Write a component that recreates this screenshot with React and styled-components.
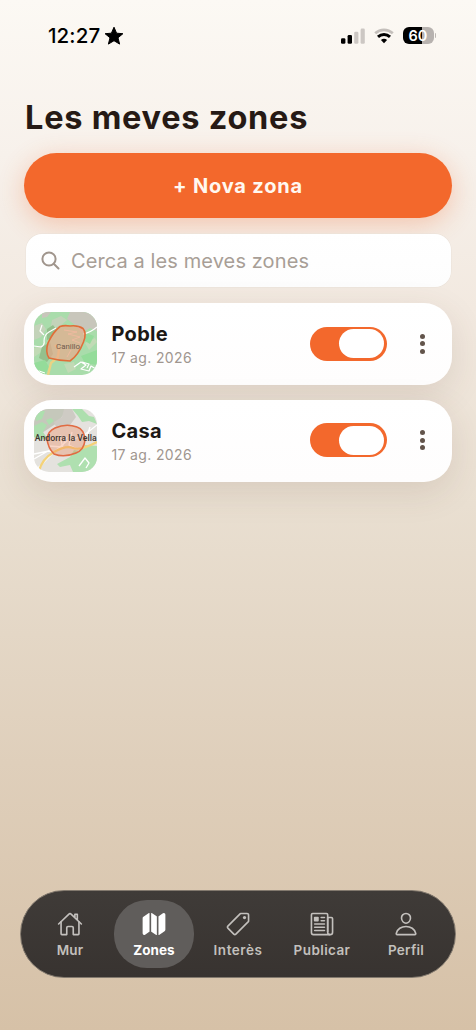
import React from 'react';
import styled, { createGlobalStyle } from 'styled-components';
import { IoHomeOutline, IoMap, IoPricetagOutline, IoNewspaperOutline, IoPersonOutline } from 'react-icons/io5';

const GlobalStyle = createGlobalStyle`
  * { box-sizing: border-box; }
  body { margin: 0; }
`;

const Screen = styled.div`
  width: 476px;
  height: 1030px;
  overflow: hidden;
  display: flex;
  flex-direction: column;
  font-family: Inter, 'Liberation Sans', sans-serif;
  color: #261a15;
  background: linear-gradient(180deg, #fcf9f4 0%, #f7f1eb 15%, #f2e9e0 30%, #e9dfd1 49%, #dfcfbb 74%, #d6c1a7 100%);
`;

const StatusBar = styled.header`
  height: 70px;
  flex: none;
  display: flex;
  align-items: center;
  justify-content: space-between;
  padding: 1px 40px 0 48px;
  color: #000;
`;

const Clock = styled.div`
  display: flex;
  align-items: center;
  gap: 3.5px;
  font-size: 20.5px;
  font-weight: 500;
  letter-spacing: 0.1px;
`;

const StatusIcons = styled.div`
  display: flex;
  align-items: center;
  gap: 9px;
  svg { display: block; }
`;

const Battery = styled.div`
  display: flex;
  align-items: center;
  gap: 1px;
  &::after {
    content: '';
    width: 1.5px;
    height: 5px;
    border-radius: 0 2px 2px 0;
    background: #bcb7b3;
  }
`;

const BatteryLevel = styled.div`
  width: 31px;
  height: 17px;
  border-radius: 6px;
  background: linear-gradient(90deg, #000 60%, #b7b2af 60%);
  color: #fff;
  font-size: 14.5px;
  font-weight: 600;
  line-height: 17px;
  text-align: center;
`;

const Content = styled.main`
  flex: 1;
  padding: 27px 24px 0;
`;

const Title = styled.h1`
  margin: 0;
  height: 56px;
  line-height: 42px;
  font-size: 32.5px;
  font-weight: 700;
  letter-spacing: 0.75px;
  white-space: nowrap;
  padding-left: 1px;
`;

const PrimaryButton = styled.button`
  display: block;
  width: 100%;
  height: 65px;
  padding: 0;
  border: 0;
  border-radius: 33px;
  background: #f3682c;
  color: #fff8f0;
  font: 700 20px Inter, sans-serif;
  letter-spacing: 0.8px;
  box-shadow: 0 6px 26px rgba(243, 104, 44, 0.3);
`;

const SearchField = styled.div`
  height: 53.5px;
  margin: 15.5px 1.5px 16px;
  display: flex;
  align-items: center;
  gap: 11.5px;
  padding: 1px 0 0 15px;
  border-radius: 16px;
  background: linear-gradient(#fff, #fdfdfd);
  box-shadow: 0 0 0 0.5px #e9e1d9;
  color: #a89e96;
  font-size: 20px;
  letter-spacing: 0.1px;
  svg { color: #a0958c; }
`;

const ZoneCard = styled.article`
  height: 82px;
  margin-bottom: 14.5px;
  display: flex;
  align-items: center;
  padding: 0 24px 1px 10px;
  border-radius: 28px;
  background: linear-gradient(#fff, #fefdfd);
  box-shadow: 0 10px 34px rgba(93, 62, 43, 0.13);
`;

const Thumbnail = styled.svg`
  width: 63px;
  height: 63px;
  flex: none;
  display: block;
  border-radius: 15px;
`;

const ZoneInfo = styled.div`
  flex: 1;
  margin-left: 14.5px;
  padding-top: 3px;
`;

const ZoneName = styled.div`
  color: #1c1815;
  font-size: 20px;
  line-height: 26px;
  font-weight: 700;
  letter-spacing: 0.3px;
`;

const ZoneDate = styled.div`
  color: #a0968f;
  font-size: 14px;
  line-height: 22px;
  letter-spacing: 0.35px;
`;

const Toggle = styled.span`
  width: 76.5px;
  height: 34px;
  flex: none;
  display: flex;
  justify-content: ${p => (p.$on ? 'flex-end' : 'flex-start')};
  padding: 2.5px;
  border-radius: 17px;
  background: ${p => (p.$on ? '#f3682c' : '#d6cec6')};
  &::after {
    content: '';
    width: 45px;
    height: 29px;
    border-radius: 15px;
    background: #fff;
  }
`;

const MoreButton = styled.span`
  width: 5px;
  margin-left: 33.5px;
  margin-right: 3px;
  display: grid;
  gap: 2.5px;
  i {
    width: 5px;
    height: 5px;
    border-radius: 50%;
    background: #62544b;
  }
`;

const NavBar = styled.nav`
  flex: none;
  height: 88px;
  margin: 0 20px 52px;
  display: grid;
  grid-template-columns: repeat(5, 84px);
  justify-content: center;
  align-items: center;
  border-radius: 44px;
  border: 1.5px solid #82796e;
  background: linear-gradient(#3f3b38, #383330);
`;

const NavItem = styled.a`
  width: 80px;
  height: 68px;
  justify-self: center;
  display: flex;
  flex-direction: column;
  align-items: center;
  padding-top: 11px;
  border-radius: 33px;
  color: ${p => (p.$active ? '#fff' : '#c3c0bd')};
  background: ${p => (p.$active ? '#605d5b' : 'transparent')};
  font-size: 13.5px;
  font-weight: ${p => (p.$active ? 700 : 600)};
  line-height: 18px;
  letter-spacing: ${p => p.$spacing}px;
  svg { display: block; margin-bottom: 4px; }
`;

function Star() {
  return (
    <svg width="20" height="20" viewBox="0 0 20 20">
      <path d="M10 1.200l2.600 6 6.300.5-4.900 4.100 1.600 6.300L10 14.700l-5.600 3.400L6 11.800 1.100 7.700l6.300-.5z" fill="#000" stroke="#000" strokeWidth="1" strokeLinejoin="round" />
    </svg>
  );
}

function Signal() {
  return (
    <svg width="24" height="16" viewBox="0 0 24 16">
      <rect x="0" y="10.200" width="4.400" height="5.600" rx="1.300" fill="#000" />
      <rect x="6.600" y="7" width="4.400" height="8.800" rx="1.300" fill="#000" />
      <rect x="13.200" y="3.800" width="4.200" height="12" rx="1.300" fill="#ccc7c3" />
      <rect x="19.600" y="0.600" width="4.200" height="15.200" rx="1.300" fill="#ccc7c3" />
    </svg>
  );
}

function Wifi() {
  return (
    <svg width="20" height="16" viewBox="0 0 20 16" fill="none">
      <path d="M1.200 5.300C6.200.700 13.800.700 18.800 5.300" stroke="#c4bfbb" strokeWidth="2.700" />
      <path d="M4 8.800c3.500-3.200 8.500-3.200 12 0" stroke="#000" strokeWidth="3" />
      <path d="M6.900 12.100c1.800-1.700 4.400-1.700 6.200 0L10 15.300z" fill="#000" />
    </svg>
  );
}

function SearchIcon() {
  return (
    <svg width="19" height="19" viewBox="0 0 19 19" fill="none" stroke="currentColor" strokeWidth="2" strokeLinecap="round">
      <circle cx="8" cy="8" r="6.600" />
      <path d="M12.700 12.700l4.800 4.800" />
    </svg>
  );
}

function PobleMap() {
  return (
    <Thumbnail viewBox="0 0 63 63">
      <rect width="63" height="63" fill="#a9dcab" />
      <path d="M8 0h9l-4 5-5 1zM36 0h27v19l-7-3-8 5-7-8-8-6z" fill="#c8c6bb" />
      <path d="M0 14l8-3 4 6-5 8-7 3zM18 8l9-4 6 4-9 8-7-2z" fill="#c3d3b9" />
      <path d="M13 17l6-4 3 4-6 10-3 1zM8 35l8-5 3 12-6 8-8-4z" fill="#94bf8c" />
      <path d="M0 36l8-3-2 8-6 4zM30 52l10-2 2 7-8 4zM51 31l10-5 2 4-8 8z" fill="#c1dab5" />
      <path d="M52 21l8 3-4 8-5-3zM47 44l16-6v15l-12-2zM0 51l11-3 4 7-4 8H0z" fill="#94dc9a" />
      <g fill="none" stroke="#fff" strokeWidth="1.200" strokeLinejoin="round">
        <path d="M0 34l7 1q4-2 3-6 0-6 5-9l7-4M49 22q7-1 14-7" />
        <path d="M0 62l5-3 6 2M40 55l7-5 5 3-5 4 8 2 2-5 5 3M48 50l7 2-2 4" />
        <path d="M8 13l-2 6 4 4" />
      </g>
      <path d="M14 63l3-12 7-6 1-8-4-4" fill="none" stroke="#ead383" strokeWidth="2.400" />
      <path d="M26 14.500Q30 13 36 14Q44 13 49 16.500Q53 21 49.500 30C46 39 42 45 36 49Q26 49 15 46Q11 40 14 31Q19 20 26 14.500Z" fill="#eda68a" fillOpacity=".65" stroke="#e06e39" strokeWidth="1.600" />
      <path d="M30 18l13 2-9 2 12 3-8 3 8 3M37 38l-4 7" fill="none" stroke="#efb99f" strokeWidth=".9" />
      <text x="22" y="37" fontFamily="Roboto" fontSize="7.600" fill="#70594d" textLength="24" lengthAdjust="spacingAndGlyphs">Canillo</text>
    </Thumbnail>
  );
}

function CasaMap() {
  return (
    <Thumbnail viewBox="0 0 63 63">
      <rect width="63" height="63" fill="#e4e2de" />
      <path d="M0 0h34L23 14 8 24l-8 2z" fill="#c5c8bb" />
      <path d="M1 2h10l-3 8-6 2zM0 17l8-4 5 3-4 7 4 6-8 2-5-3zM38 0h10l7 7 5 1 3 7-8-3-7 1-4-6zM12 11l5-2 3 3-5 4z" fill="#addfae" />
      <path d="M63 37v26H39l-3-7-10 2-3-3 13-7 4-7 6 1 5-6z" fill="#afe0b0" />
      <path d="M30 0h8l4 8-6 8-14 2-2-5 8-5z" fill="#cecbc4" />
      <g fill="none" stroke="#fff" strokeWidth="1.300" strokeLinejoin="round">
        <path d="M0 50l14-8 6 1M0 45l15-3M2 61l17-17M20 43l13-11 16-5 14-11" />
        <path d="M15 37l13 1 5-10M26 26l3 14M38 23l-3 13 8 4M56 18l-4 12M45 57l6-8 4 5-3 5" />
      </g>
      <path d="M5 62Q8 50 20 43T39 39T63 33" fill="none" stroke="#f4d278" strokeWidth="2.200" />
      <path d="M21 19Q32 14 43 18Q50 20 51 31Q50 41 42 44Q30 49 20 45Q14 39 13 30Q14 22 21 19Z" fill="#f07e50" fillOpacity=".32" stroke="#e16b43" strokeWidth="1.600" />
      <text x="0.700" y="32" fontFamily="Roboto" fontWeight="500" fontSize="8.400" fill="#40352f" textLength="62" lengthAdjust="spacingAndGlyphs">Andorra la Vella</text>
    </Thumbnail>
  );
}

const zones = [
  { name: 'Poble', date: '17 ag. 2026', Map: PobleMap },
  { name: 'Casa', date: '17 ag. 2026', Map: CasaMap },
];

const tabs = [
  { label: 'Mur', Icon: IoHomeOutline, spacing: 0.1 },
  { label: 'Zones', Icon: IoMap, active: true, spacing: 0 },
  { label: 'Interès', Icon: IoPricetagOutline, spacing: 0.55 },
  { label: 'Publicar', Icon: IoNewspaperOutline, spacing: 0.4 },
  { label: 'Perfil', Icon: IoPersonOutline, spacing: 0.25 },
];

export default function App() {
  return (
    <Screen>
      <GlobalStyle />
      <StatusBar>
        <Clock>12:27<Star /></Clock>
        <StatusIcons>
          <Signal />
          <Wifi />
          <Battery><BatteryLevel>60</BatteryLevel></Battery>
        </StatusIcons>
      </StatusBar>
      <Content>
        <Title>Les meves zones</Title>
        <PrimaryButton>+ Nova zona</PrimaryButton>
        <SearchField><SearchIcon />Cerca a les meves zones</SearchField>
        {zones.map(({ name, date, Map }) => (
          <ZoneCard key={name}>
            <Map />
            <ZoneInfo>
              <ZoneName>{name}</ZoneName>
              <ZoneDate>{date}</ZoneDate>
            </ZoneInfo>
            <Toggle $on />
            <MoreButton><i /><i /><i /></MoreButton>
          </ZoneCard>
        ))}
      </Content>
      <NavBar>
        {tabs.map(({ label, Icon, active, spacing }) => (
          <NavItem key={label} $active={active} $spacing={spacing}>
            <Icon size={26} />
            {label}
          </NavItem>
        ))}
      </NavBar>
    </Screen>
  );
}
